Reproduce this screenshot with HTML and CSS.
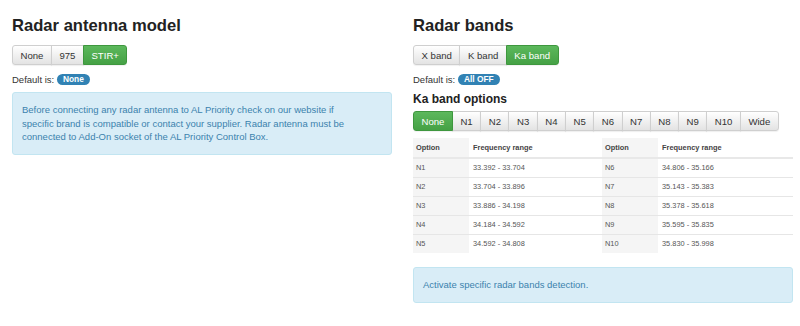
FILE: index.html
```html
<!DOCTYPE html>
<html>
<head>
    <link rel="stylesheet" href="styles.css">
</head>
<body>
    <div class="page">
        <div class="col">
            <h2>Radar antenna model</h2>
            <div class="btn-group">
                <button class="btn">None</button>
                <button class="btn">975</button>
                <button class="btn active">STIR+</button>
            </div>
            <p class="default">Default is: <span class="badge">None</span></p>
            <div class="alert narrow">
                Before connecting any radar antenna to AL Priority check on our website if
                specific brand is compatible or contact your supplier. Radar antenna must be
                connected to Add-On socket of the AL Priority Control Box.
            </div>
        </div>

        <div class="col">
            <h2>Radar bands</h2>
            <div class="btn-group">
                <button class="btn">X band</button>
                <button class="btn">K band</button>
                <button class="btn active">Ka band</button>
            </div>
            <p class="default">Default is: <span class="badge">All OFF</span></p>

            <h4>Ka band options</h4>
            <div class="btn-group">
                <button class="btn active">None</button>
                <button class="btn">N1</button>
                <button class="btn">N2</button>
                <button class="btn">N3</button>
                <button class="btn">N4</button>
                <button class="btn">N5</button>
                <button class="btn">N6</button>
                <button class="btn">N7</button>
                <button class="btn">N8</button>
                <button class="btn">N9</button>
                <button class="btn">N10</button>
                <button class="btn">Wide</button>
            </div>

            <table class="ranges">
                <tr>
                    <th class="opt">Option</th>
                    <th>Frequency range</th>
                    <th class="opt">Option</th>
                    <th>Frequency range</th>
                </tr>
                <tr><td class="opt">N1</td><td>33.392 - 33.704</td><td class="opt">N6</td><td>34.806 - 35.166</td></tr>
                <tr><td class="opt">N2</td><td>33.704 - 33.896</td><td class="opt">N7</td><td>35.143 - 35.383</td></tr>
                <tr><td class="opt">N3</td><td>33.886 - 34.198</td><td class="opt">N8</td><td>35.378 - 35.618</td></tr>
                <tr><td class="opt">N4</td><td>34.184 - 34.592</td><td class="opt">N9</td><td>35.595 - 35.835</td></tr>
                <tr><td class="opt">N5</td><td>34.592 - 34.808</td><td class="opt">N10</td><td>35.830 - 35.998</td></tr>
            </table>

            <div class="alert last">
                Activate specific radar bands detection.
            </div>
        </div>
    </div>
</body>
</html>
```

FILE: styles.css
```css
body {
    margin: 0;
    font-family: "Liberation Sans", Arial, sans-serif;
    font-size: 9.5px;
    line-height: 13.6px;
    color: #333;
    background: #fff;
}

.page {
    display: grid;
    grid-template-columns: 380px 380px;
    column-gap: 21px;
    padding-left: 12px;
}

h2 {
    margin: 16px 0 0;
    font-size: 16.6px;
    line-height: 20px;
    font-weight: bold;
    color: #222;
}

h4 {
    margin: 5px 0 0;
    font-size: 12px;
    line-height: 14px;
    font-weight: bold;
    color: #222;
}

.btn-group {
    display: flex;
    margin-top: 9px;
}

.col h4 + .btn-group {
    margin-top: 5px;
}

.btn {
    height: 20px;
    padding: 0 7.5px;
    margin: 0;
    margin-left: -1px;
    font-family: inherit;
    font-size: 9.6px;
    color: #333;
    background: linear-gradient(#ffffff, #e3e3e3);
    border: 1px solid #cfcfcf;
    border-radius: 0;
    box-shadow: 0 1px 1px rgba(0, 0, 0, 0.06);
}

.btn:first-child {
    margin-left: 0;
    border-radius: 3px 0 0 3px;
}

.btn:last-child {
    border-radius: 0 3px 3px 0;
}

.btn.active {
    color: #fff;
    background: linear-gradient(#5cb85c, #45a145);
    border-color: #3e973e;
    position: relative;
}

.default {
    margin: 8px 0 0;
    line-height: 14px;
}

.badge {
    display: inline-block;
    padding: 0 6px;
    font-size: 8.4px;
    font-weight: bold;
    line-height: 11px;
    color: #fff;
    background: #3182b4;
    border-radius: 6px;
    vertical-align: 1px;
}

.alert {
    margin-top: 5px;
    padding: 10px 9px;
    color: #3b82ad;
    background: #d9edf7;
    border: 1px solid #c2e5f1;
    border-radius: 3px;
}

.alert.narrow {
    padding-right: 30px;
}

.alert.last {
    margin-top: 14px;
}

.ranges {
    width: 380px;
    margin-top: 7px;
    border-collapse: collapse;
    font-size: 7.4px;
    color: #555;
}

.ranges th,
.ranges td {
    height: 18px;
    padding: 0 4px;
    text-align: left;
    border-top: 1px solid #e6e6e6;
}

.ranges th {
    border-top: none;
    height: 19px;
    font-weight: bold;
    color: #444;
}

.ranges tr:nth-child(2) td {
    border-top: 2px solid #e8e8e8;
}

.ranges .opt {
    width: 49px;
    padding-left: 3px;
    background: #f5f5f5;
}

.ranges td:nth-child(2),
.ranges th:nth-child(2) {
    width: 125px;
}
```
